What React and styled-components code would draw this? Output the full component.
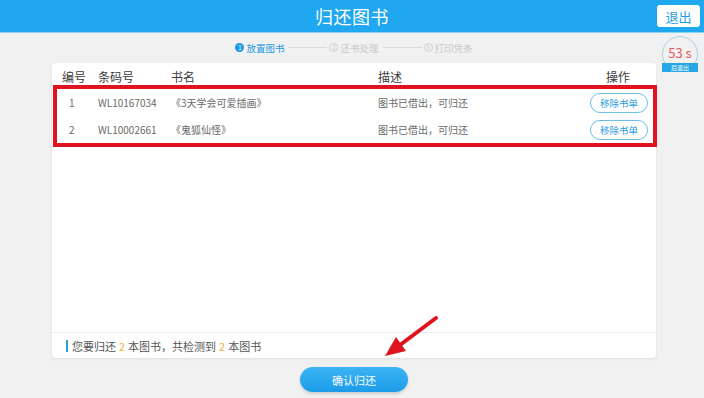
import React from 'react';
import styled, { createGlobalStyle } from 'styled-components';

const GlobalStyle = createGlobalStyle`
    html, body {
        margin: 0;
        padding: 0;
        background: #f1f1f1;
    }
    body {
        font-family: "Noto Sans CJK SC", "Noto Sans", sans-serif;
    }
`;

const Page = styled.div`
    position: relative;
    width: 704px;
    height: 398px;
    overflow: hidden;
    display: flex;
    flex-direction: column;
    background: #f1f1f1;
`;

const Header = styled.header`
    height: 32px;
    background: #1fa7f0;
    box-shadow: 0 1px 0 #8fd0f5;
    display: grid;
    grid-template-columns: 1fr auto 1fr;
    align-items: center;
    h1 {
        grid-column: 2;
        margin: 0;
        color: #fff;
        font-size: 18px;
        font-weight: 400;
        letter-spacing: 0.5px;
    }
`;

const ExitButton = styled.button`
    justify-self: end;
    margin-right: 4px;
    width: 43px;
    height: 22px;
    border: none;
    border-radius: 3px;
    background: #fff;
    color: #1f9ee8;
    font-family: inherit;
    font-size: 13px;
    padding: 0;
`;

const Main = styled.main`
    display: grid;
    grid-template-columns: 52px 604px 1fr;
    grid-template-rows: 31px 295px auto;
`;

const Steps = styled.div`
    grid-column: 2;
    grid-row: 1;
    display: flex;
    align-items: center;
    justify-content: center;
`;

const Step = styled.div`
    display: flex;
    align-items: center;
    gap: 2px;
    font-size: 9.5px;
    color: ${props => props.active ? '#1e9be6' : '#c9c9c9'};
`;

const StepNum = styled.span`
    width: 9px;
    height: 9px;
    box-sizing: border-box;
    border-radius: 50%;
    display: flex;
    align-items: center;
    justify-content: center;
    font-size: 6px;
    background: ${props => props.active ? '#1e9be6' : 'transparent'};
    color: ${props => props.active ? '#fff' : '#c9c9c9'};
    border: ${props => props.active ? 'none' : '1px solid #cfcfcf'};
`;

const StepLine = styled.span`
    width: 39px;
    height: 1px;
    background: #d8d8d8;
    margin: 0 2px 0 4px;
`;

const Timer = styled.div`
    grid-column: 3;
    grid-row: 1 / span 2;
    align-self: start;
    position: relative;
    width: 36px;
    height: 37px;
    margin: 4px 0 0 6px;
    .ring {
        width: 36px;
        height: 36px;
        box-sizing: border-box;
        border: 1px solid #a8cfe2;
        border-radius: 50%;
        display: flex;
        justify-content: center;
        padding-top: 8px;
        color: #e8585a;
        font-size: 13px;
        line-height: 16px;
    }
`;

const TimerLabel = styled.div`
    position: absolute;
    left: 0;
    top: 27px;
    width: 36px;
    height: 9px;
    background: #27a6e6;
    color: #fff;
    font-size: 6px;
    line-height: 9px;
    text-align: center;
`;

const Card = styled.section`
    grid-column: 2;
    grid-row: 2;
    background: #fff;
    border-radius: 4px;
    box-shadow: 0 1px 3px rgba(0, 0, 0, 0.08);
    display: flex;
    flex-direction: column;
`;

const HeadRow = styled.div`
    display: grid;
    grid-template-columns: 36px 73px 207px 1fr 76px;
    padding: 5px 0 0 10px;
    height: 17px;
    line-height: 17px;
    font-size: 12px;
    color: #3a3a3a;
    span:last-child {
        text-align: center;
    }
`;

const Rows = styled.div`
    margin: 0 -1px 0 1px;
    border: 4px solid #e0141e;
`;

const Row = styled.div`
    display: grid;
    grid-template-columns: 41px 73px 207px 1fr 68px;
    align-items: center;
    height: 27px;
    font-size: 10px;
    color: #6a6a6a;
    span:first-child {
        padding-left: 12px;
    }
`;

const RemoveButton = styled.button`
    justify-self: center;
    width: 58px;
    height: 20px;
    padding: 0;
    border: 1px solid #6cbde8;
    border-radius: 10px;
    background: #fff;
    color: #2f9be0;
    font-family: inherit;
    font-size: 9.5px;
`;

const Filler = styled.div`
    flex: 1;
`;

const Footer = styled.div`
    height: 25px;
    border-top: 1px solid #ececec;
    display: flex;
    align-items: center;
    padding-left: 14px;
    font-size: 11px;
    color: #555;
    &:before {
        content: '';
        width: 2px;
        height: 12px;
        background: #2aa0d4;
        margin-right: 4px;
    }
`;

const Num = styled.span`
    color: #f0b040;
    margin: 0 3px;
`;

const Actions = styled.div`
    grid-column: 2;
    grid-row: 3;
    display: flex;
    justify-content: center;
    padding-top: 9px;
`;

const ConfirmButton = styled.button`
    width: 108px;
    height: 25px;
    padding: 0;
    border: none;
    border-radius: 13px;
    background: linear-gradient(#3db4f4, #1b9be9);
    box-shadow: 0 2px 3px rgba(0, 0, 0, 0.15);
    color: #fff;
    font-family: inherit;
    font-size: 11px;
`;

const Arrow = styled.svg`
    position: absolute;
    left: 380px;
    top: 314px;
    pointer-events: none;
`;

const books = [
    { id: 1, code: 'WL10167034', name: '《3天学会可爱插画》', desc: '图书已借出，可归还' },
    { id: 2, code: 'WL10002661', name: '《鬼狐仙怪》', desc: '图书已借出，可归还' },
];

const steps = ['放置图书', '还书处理', '打印凭条'];

const App = () => {
    return (
        <Page>
            <GlobalStyle />
            <Header>
                <h1>归还图书</h1>
                <ExitButton>退出</ExitButton>
            </Header>
            <Main>
                <Steps>
                    {steps.map((s, i) => (
                        <React.Fragment key={s}>
                            {i > 0 && <StepLine />}
                            <Step active={i === 0}>
                                <StepNum active={i === 0}>{i + 1}</StepNum>
                                {s}
                            </Step>
                        </React.Fragment>
                    ))}
                </Steps>
                <Timer>
                    <div className="ring">53 s</div>
                    <TimerLabel>后退出</TimerLabel>
                </Timer>
                <Card>
                    <HeadRow>
                        <span>编号</span>
                        <span>条码号</span>
                        <span>书名</span>
                        <span>描述</span>
                        <span>操作</span>
                    </HeadRow>
                    <Rows>
                        {books.map(b => (
                            <Row key={b.id}>
                                <span>{b.id}</span>
                                <span>{b.code}</span>
                                <span>{b.name}</span>
                                <span>{b.desc}</span>
                                <RemoveButton>移除书单</RemoveButton>
                            </Row>
                        ))}
                    </Rows>
                    <Filler />
                    <Footer>
                        您要归还<Num>2</Num>本图书，共检测到<Num>2</Num>本图书
                    </Footer>
                </Card>
                <Actions>
                    <ConfirmButton>确认归还</ConfirmButton>
                </Actions>
            </Main>
            <Arrow width="60" height="46" viewBox="0 0 60 46">
                <line x1="56" y1="4" x2="20" y2="31" stroke="#e0141e" strokeWidth="4" strokeLinecap="round" />
                <polygon points="5,42 26,37 16,23" fill="#e0141e" />
            </Arrow>
        </Page>
    );
};

export default App;
